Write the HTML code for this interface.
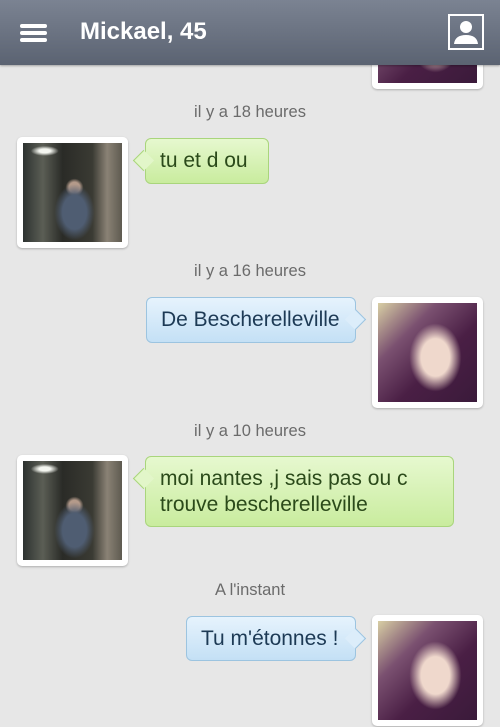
<!DOCTYPE html>
<html><head><meta charset="utf-8"><style>
*{margin:0;padding:0;box-sizing:border-box}
body{width:500px;height:727px;overflow:hidden;background:#e7e7e7;font-family:"Liberation Sans","DejaVu Sans",sans-serif;position:relative}
.hdr{position:absolute;left:0;top:0;width:500px;height:65px;background:linear-gradient(#7b8392,#5b6372);box-shadow:0 1px 2px rgba(0,0,0,.3);z-index:5}
.hdr .t{position:absolute;left:80px;top:18px;color:#fff;font-size:24px;font-weight:bold}
.bar{position:absolute;left:20px;width:27px;height:4px;background:#fff;border-radius:2px}
.pi{position:absolute;left:448px;top:14px;width:36px;height:36px;border:2px solid #fff}
.ts{position:absolute;left:0;width:500px;text-align:center;color:#6b6b6b;font-size:16.5px}
.av{position:absolute;width:111px;height:111px;background:#fff;border-radius:5px;box-shadow:0 1px 2px rgba(0,0,0,.25);padding:6px}
.av div{width:100%;height:100%}
.man{background:radial-gradient(ellipse 14px 5px at 22% 8%,#f4f6f0 40%,transparent 100%),radial-gradient(ellipse 20px 28px at 52% 70%,#4f5d72 60%,transparent 100%),radial-gradient(circle 9px at 52% 45%,#b49a8a 60%,transparent 100%),linear-gradient(90deg,#2d3230 0%,#5b5e55 20%,#2a2b27 40%,#3a3a33 70%,#8a8275 85%,#5e5a50 100%)}
.wom{background:radial-gradient(ellipse 26px 34px at 58% 55%,#efd8cc 55%,transparent 100%),linear-gradient(135deg,#d8cfa4 0%,#7a5070 30%,#4a1f45 60%,#3a1a3a 100%)}
.b{position:absolute;border-radius:6px;font-size:21px;padding:0 14px;display:flex;align-items:center;line-height:26px;white-space:nowrap}
.g{background:linear-gradient(#e6f8cf,#c9ec9e);border:1px solid #a9d57c;color:#2b4a1a}
.bl{background:linear-gradient(#e6f3fd,#c4e0f5);border:1px solid #9cc4e0;color:#1d3a55}
.g:before{content:"";position:absolute;left:-10px;top:14px;width:14px;height:14px;background:#e2f6c9;border-left:1px solid #a9d57c;border-bottom:1px solid #a9d57c;transform:rotate(45deg)}
.bl:after{content:"";position:absolute;right:-8px;top:14px;width:14px;height:14px;background:#dcedfa;border-right:1px solid #9cc4e0;border-top:1px solid #9cc4e0;transform:rotate(45deg)}
</style></head><body>
<div class="hdr">
<div class="bar" style="top:24px"></div><div class="bar" style="top:31px"></div><div class="bar" style="top:38px"></div>
<div class="t">Mickael, 45</div>
<div class="pi"><svg width="32" height="32" viewBox="0 0 32 32"><circle cx="16" cy="11" r="6" fill="#fff"/><path d="M4 28 Q5 19 16 19 Q27 19 28 28 Z" fill="#fff"/></svg></div>
</div>
<div class="av" style="left:372px;top:-22px"><div class="wom"></div></div>
<div class="ts" style="top:103px">il y a 18 heures</div>
<div class="av" style="left:17px;top:137px"><div class="man"></div></div>
<div class="b g" style="left:145px;top:138px;width:124px;height:46px">tu et d ou</div>
<div class="ts" style="top:262px">il y a 16 heures</div>
<div class="b bl" style="left:146px;top:297px;width:210px;height:46px">De Bescherelleville</div>
<div class="av" style="left:372px;top:297px"><div class="wom"></div></div>
<div class="ts" style="top:422px">il y a 10 heures</div>
<div class="av" style="left:17px;top:455px"><div class="man"></div></div>
<div class="b g" style="left:145px;top:456px;width:309px;height:71px">moi nantes ,j sais pas ou c<br>trouve bescherelleville</div>
<div class="ts" style="top:581px">A l'instant</div>
<div class="b bl" style="left:186px;top:616px;width:170px;height:45px">Tu m'étonnes !</div>
<div class="av" style="left:372px;top:615px"><div class="wom"></div></div>
</body></html>
